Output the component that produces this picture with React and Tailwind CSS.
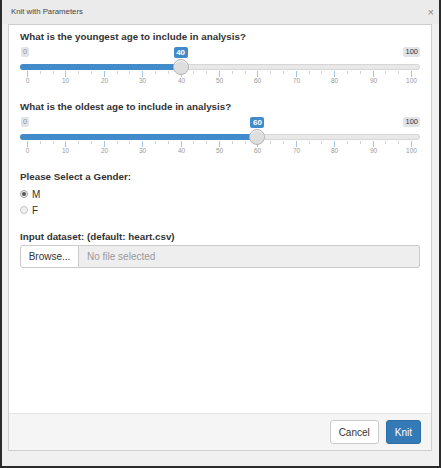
import React from "react";

const FONT = { fontFamily: '"Liberation Sans", Arial, sans-serif' };

function Slider({ value }) {
    const left = (v) => 7 + (v / 100) * 384;
    const ticks = [];
    for (let i = 0; i <= 30; i++) {
        ticks.push(i);
    }
    const labels = [0, 10, 20, 30, 40, 50, 60, 70, 80, 90, 100];

    return (
        <div className="relative w-[400px] h-[40px]">
            {/* min / max / current badges */}
            <span className="absolute left-[1px] top-[1px] h-[10px] px-[2px] rounded-[2px] bg-[#e1e4e9] text-[#999] text-[7.5px] leading-[10px]">0</span>
            <span className="absolute right-[0px] top-[1px] h-[10px] px-[2px] rounded-[2px] bg-[#e1e4e9] text-[#333] text-[7.5px] leading-[10px]">100</span>
            <span
                className="absolute top-[1px] h-[11px] w-[14px] -translate-x-1/2 rounded-[2px] bg-[#428bca] text-white text-[8px] leading-[11px] text-center font-bold"
                style={{ left: left(value) }}
            >
                {value}
            </span>

            {/* track */}
            <div className="absolute left-0 right-0 top-[18px] h-[6px] rounded-full bg-[#e8e8e8] border border-[#d6d6d6]" />
            <div
                className="absolute left-0 top-[18px] h-[6px] rounded-l-full bg-[#428bca]"
                style={{ width: left(value) }}
            />

            {/* ticks */}
            {ticks.map((t) => (
                <span
                    key={t}
                    className={t % 3 === 0 ? "absolute top-[25px] w-px h-[6px] bg-[#a3c4e4]" : "absolute top-[25px] w-px h-[3px] bg-[#d4d4d4]"}
                    style={{ left: Math.round(7 + (t / 30) * 384) }}
                />
            ))}
            {labels.map((l) => (
                <span
                    key={l}
                    className="absolute top-[31px] w-[20px] -ml-[10px] text-center text-[6.5px] leading-[8px] text-[#999]"
                    style={{ left: Math.round(left(l)) + 0.5 }}
                >
                    {l}
                </span>
            ))}

            {/* handle */}
            <span
                className="absolute top-[13px] w-[16px] h-[16px] -translate-x-1/2 rounded-full bg-[#dedede] border border-[#b5b5b5] shadow-[inset_0_1px_0_#fff]"
                style={{ left: left(value) }}
            />
        </div>
    );
}

export default function App() {
    return (
        <div className="w-[441px] h-[468px] flex flex-col bg-[#f0f0f0] border-l-2 border-r-2 border-b-2 border-[#2b2b2b]" style={FONT}>
            {/* Title bar */}
            <div className="h-[24px] shrink-0 flex items-center justify-between pl-[9px] pr-[5px] bg-[#ebebeb]">
                <span className="text-[7.8px] text-[#444]">Knit with Parameters</span>
                <span className="text-[11px] leading-none text-[#888]">×</span>
            </div>

            {/* Dialog frame */}
            <div className="flex-1 flex flex-col ml-[6px] mr-[7px] border border-[#cfcfcf] bg-white">
                <div className="flex-1 pl-[11px] pt-[6px] text-[#333]">
                    <h3 className="text-[9.8px] font-bold leading-[12px]">What is the youngest age to include in analysis?</h3>
                    <div className="mt-[3px]">
                        <Slider value={40} />
                    </div>

                    <h3 className="mt-[15px] text-[9.8px] font-bold leading-[12px]">What is the oldest age to include in analysis?</h3>
                    <div className="mt-[3px]">
                        <Slider value={60} />
                    </div>

                    <h3 className="mt-[15px] text-[9.8px] font-bold leading-[12px]">Please Select a Gender:</h3>
                    <div className="mt-[5px] flex flex-col gap-[4px]">
                        <label className="flex items-center gap-[4px] h-[12px] text-[10px]">
                            <span className="w-[8px] h-[8px] rounded-full border border-[#a9a9a9] bg-[#e9e9e9] flex items-center justify-center">
                                <span className="w-[4px] h-[4px] rounded-full bg-[#555]" />
                            </span>
                            M
                        </label>
                        <label className="flex items-center gap-[4px] h-[12px] text-[10px]">
                            <span className="w-[8px] h-[8px] rounded-full border border-[#c4c4c4] bg-[#f0f0f0]" />
                            F
                        </label>
                    </div>

                    <h3 className="mt-[15px] text-[9.8px] font-bold leading-[12px]">Input dataset: (default: heart.csv)</h3>
                    <div className="mt-[2px] flex w-[400px] h-[23px]">
                        <button className="w-[59px] border border-[#ccc] rounded-l-[3px] bg-white text-[10px] text-[#333]">Browse...</button>
                        <div className="flex-1 flex items-center pl-[8px] border border-l-0 border-[#ccc] rounded-r-[3px] bg-[#eeeeee] text-[10px] text-[#999]">
                            No file selected
                        </div>
                    </div>
                </div>

                {/* Footer */}
                <div className="h-[37px] shrink-0 flex items-center justify-end gap-[7px] pr-[10px] bg-[#f5f5f5] border-t border-[#e5e5e5]">
                    <button className="h-[24px] px-[8px] rounded-[3px] border border-[#ccc] bg-white text-[10px] text-[#333]">Cancel</button>
                    <button className="h-[24px] px-[8px] rounded-[3px] border border-[#2e6da4] bg-[#337ab7] text-[10px] text-white">Knit</button>
                </div>
            </div>

            <div className="h-[15px] shrink-0" />
        </div>
    );
}
